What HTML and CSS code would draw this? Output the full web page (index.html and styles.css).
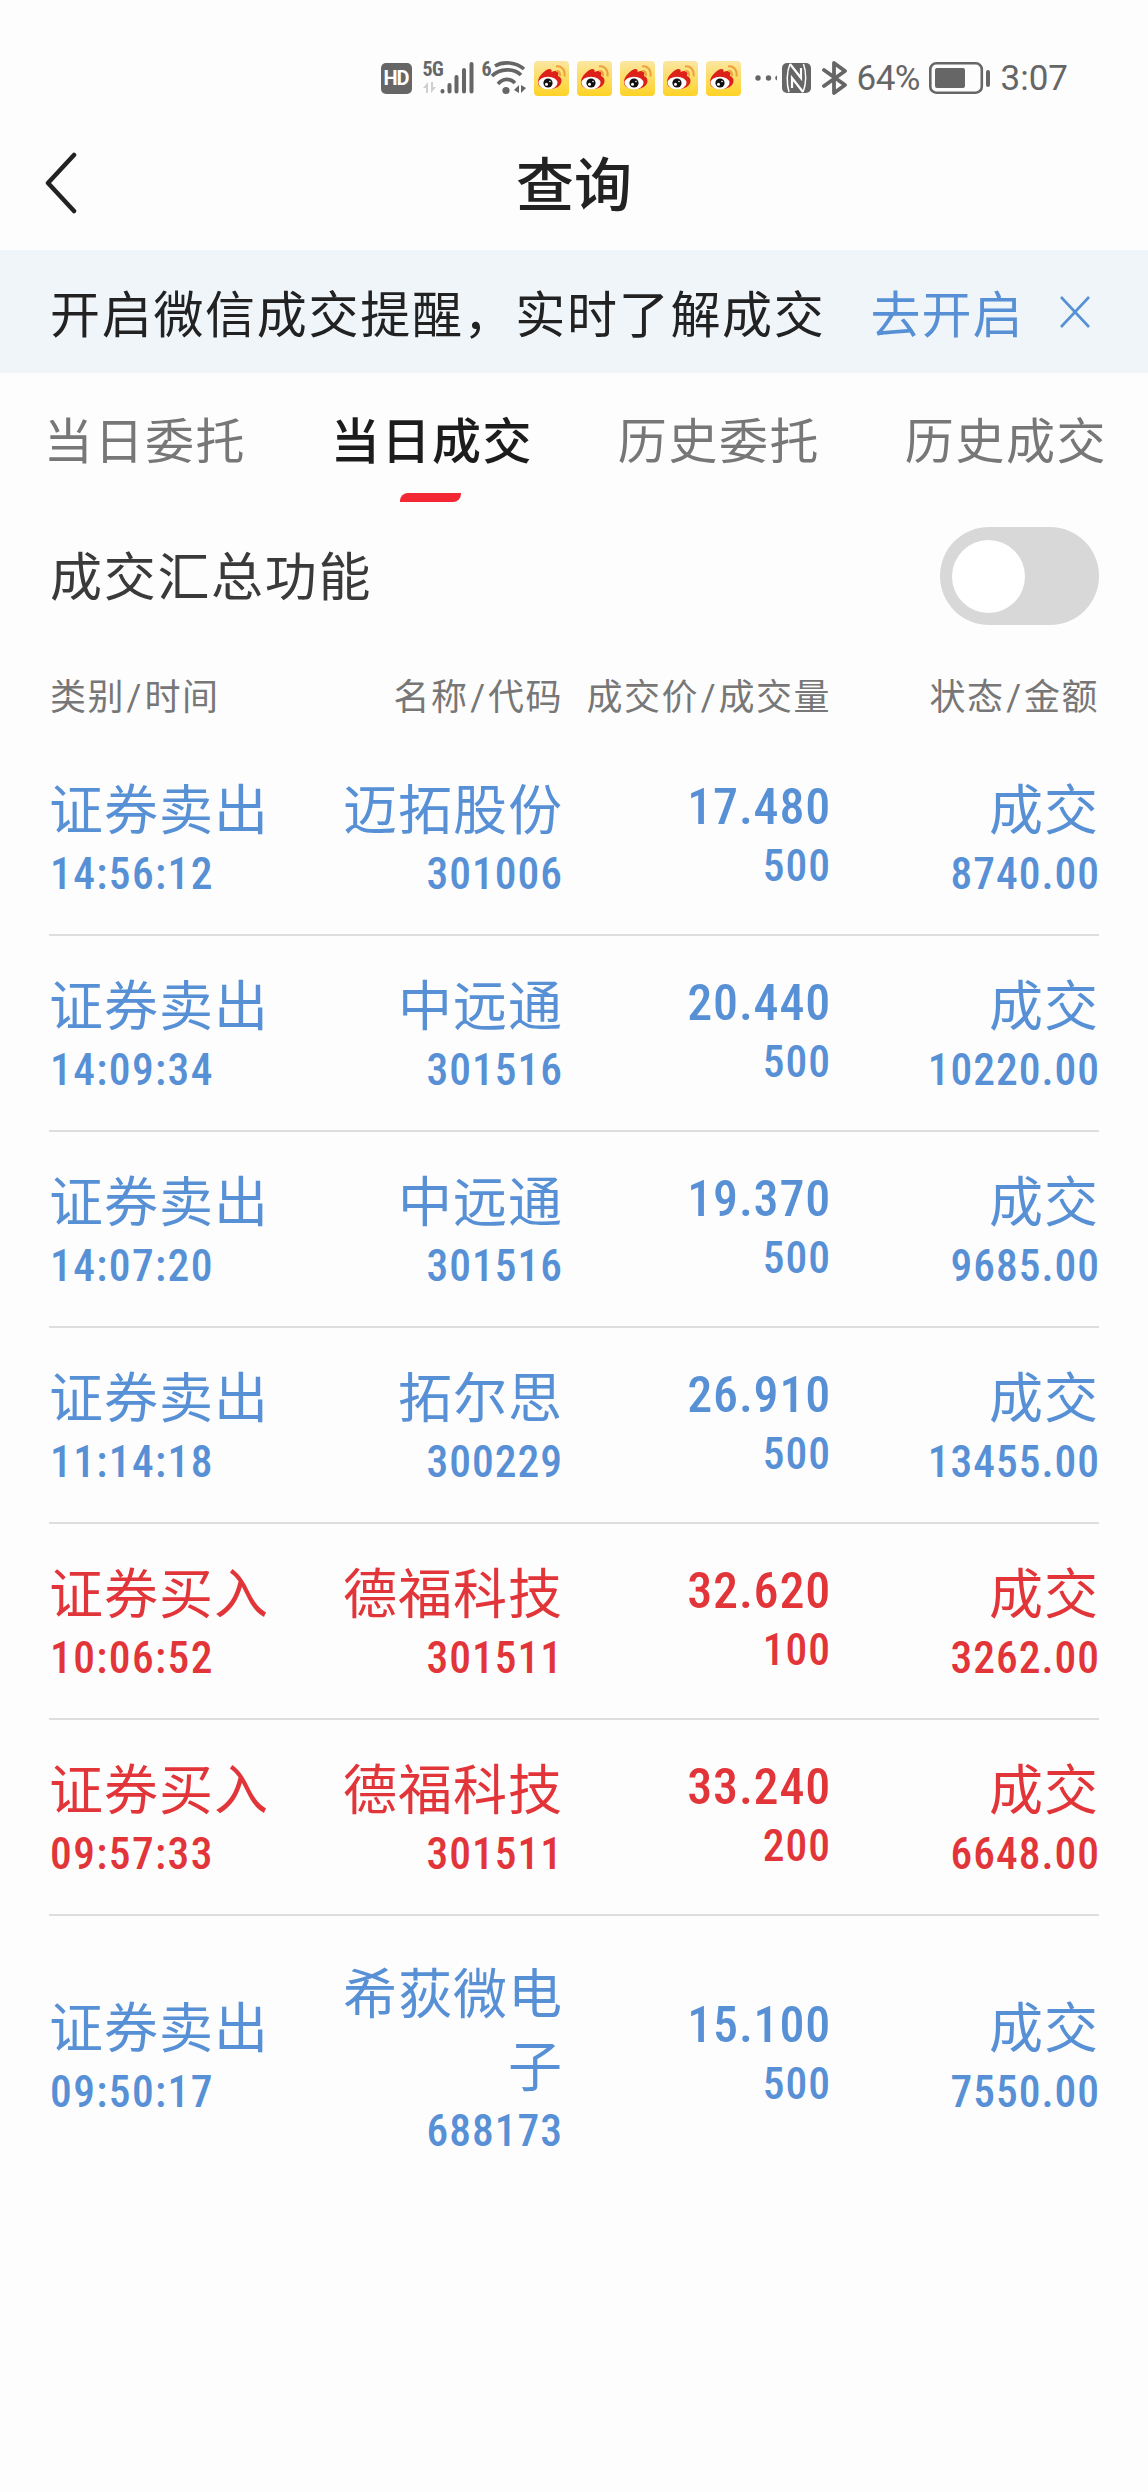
FILE: index.html
```html
<!DOCTYPE html>
<html lang="zh-CN">
<head>
  <meta charset="utf-8">
  <title>查询</title>
  <link rel="stylesheet" href="styles.css">
</head>
<body>
  <!-- shared status bar icon -->
  <svg width="0" height="0" class="defs">
    <defs>
      <linearGradient id="wb-bg" x1="0" y1="0" x2="0" y2="1">
        <stop offset="0" stop-color="#fbe6a2"/>
        <stop offset="1" stop-color="#fdd325"/>
      </linearGradient>
      <symbol id="weibo" viewBox="0 0 35 35">
        <rect width="35" height="35" rx="4" fill="url(#wb-bg)"/>
        <path d="M4 21C4 15 11 9 15 8c2.500 0 3 1 2.500 3 3-1.500 6.500-1.500 7 1 0 1-.5 2-.5 3 2.500 1 3.500 2.500 3.500 5 0 5-6 8-12 8S4 27 4 21z" fill="#dd211a"/>
        <ellipse cx="14" cy="22" rx="9.500" ry="6.300" fill="#fff"/>
        <circle cx="14" cy="22" r="4.600" fill="#111"/>
        <circle cx="12.500" cy="23.300" r="1.500" fill="#fff"/>
        <circle cx="16" cy="20.500" r=".8" fill="#fff"/>
        <path d="M22 5.500c5-1 9.500 3 8.500 10M22 10c2.800-.5 4.500 1.500 4 5" fill="none" stroke="#eda13a" stroke-width="2"/>
      </symbol>
    </defs>
  </svg>

  <div class="statusbar">
    <span class="hd">HD</span>
    <span class="signal">
      <span class="net">5G</span>
      <svg width="52" height="34" viewBox="0 0 52 34">
        <path d="M6 21v11H4v-5H1zM9 21v11l5-6h-3v-5z" fill="#cfcfcf"/>
        <path d="M20.500 30v.5M27.500 24v6.500M34.500 16v14.500M42 9v21.500M49.500 3v27.500" stroke="#666" stroke-width="4" stroke-linecap="round"/>
      </svg>
    </span>
    <span class="wifi">
      <span class="gen">6</span>
      <svg width="44" height="34" viewBox="0 0 44 34">
        <g fill="none" stroke="#666" stroke-width="3.600">
          <path d="M12 5C20 0 33 1 41 8"/>
          <path d="M9 15C17 7 31 7 38 14"/>
          <path d="M15 23C20 17 27 17 32 22"/>
        </g>
        <circle cx="23" cy="29.500" r="3.600" fill="#666"/>
        <path d="M31 29l5-5v8zM38 24v8l5-5z" fill="#666"/>
      </svg>
    </span>
    <svg class="wb" width="35" height="35"><use href="#weibo"/></svg>
    <svg class="wb" width="35" height="35"><use href="#weibo"/></svg>
    <svg class="wb" width="35" height="35"><use href="#weibo"/></svg>
    <svg class="wb" width="35" height="35"><use href="#weibo"/></svg>
    <svg class="wb" width="35" height="35"><use href="#weibo"/></svg>
    <svg class="dots" width="22" height="6" viewBox="0 0 22 6" fill="#666">
      <circle cx="3" cy="3" r="2.700"/><circle cx="13.500" cy="3" r="2.700"/><path d="M22 .5a2.600 2.600 0 0 0 0 5z"/>
    </svg>
    <svg class="nfc" width="29" height="30" viewBox="0 0 29 30">
      <rect width="29" height="30" rx="5" fill="#666"/>
      <path d="M8 1C4.500 9 4.500 21 7 29M21.500 1c3 8 3 20-.5 28" fill="none" stroke="#fdfdfd" stroke-width="1.500"/>
      <path d="M8 1l11 14V5M21 29L10 15v10" fill="none" stroke="#fdfdfd" stroke-width="2.200"/>
    </svg>
    <svg class="bt" width="26" height="34" viewBox="0 0 26 34">
      <path d="M2 9l21 15-11 8V2l11 8L2 25" fill="none" stroke="#666" stroke-width="3.800" stroke-linejoin="round" stroke-linecap="round"/>
    </svg>
    <span class="pct">64%</span>
    <svg class="battery" width="62" height="32" viewBox="0 0 62 32">
      <rect x="1.300" y="1.300" width="51.500" height="29.400" rx="6" fill="none" stroke="#666" stroke-width="2.600"/>
      <rect x="6" y="6" width="30" height="20" rx="2" fill="#666"/>
      <rect x="57" y="8" width="4" height="17" rx="2" fill="#666"/>
    </svg>
    <span class="clock">3:07</span>
  </div>

  <div class="titlebar">
    <svg class="back" width="34" height="62" viewBox="0 0 34 62">
      <path d="M30 3L4 31l26 28" fill="none" stroke="#222" stroke-width="4.500" stroke-linecap="round" stroke-linejoin="round"/>
    </svg>
    <h1>查询</h1>
  </div>

  <div class="notice">
    <span class="msg">开启微信成交提醒，实时了解成交</span>
    <a class="open">去开启</a>
    <svg class="close" width="32" height="32" viewBox="0 0 32 32">
      <path d="M2 1l28 30M30 1L2 31" stroke="#5890d6" stroke-width="2.600"/>
    </svg>
  </div>

  <div class="tabs">
    <div class="tab">当日委托</div>
    <div class="tab active">当日成交</div>
    <div class="tab">历史委托</div>
    <div class="tab">历史成交</div>
  </div>

  <div class="summary">
    <span>成交汇总功能</span>
    <div class="switch"><i></i></div>
  </div>

  <div class="list">
    <div class="head">
      <div>类别<s>/</s>时间</div>
      <div>名称<s>/</s>代码</div>
      <div>成交价<s>/</s>成交量</div>
      <div>状态<s>/</s>金额</div>
    </div>
    <div class="row sell">
      <div class="cell"><b>证券卖出</b><i>14:56:12</i></div>
      <div class="cell"><b>迈拓股份</b><i>301006</i></div>
      <div class="cell price"><em>17.480</em><i>500</i></div>
      <div class="cell"><b>成交</b><i>8740.00</i></div>
    </div>
    <div class="row sell">
      <div class="cell"><b>证券卖出</b><i>14:09:34</i></div>
      <div class="cell"><b>中远通</b><i>301516</i></div>
      <div class="cell price"><em>20.440</em><i>500</i></div>
      <div class="cell"><b>成交</b><i>10220.00</i></div>
    </div>
    <div class="row sell">
      <div class="cell"><b>证券卖出</b><i>14:07:20</i></div>
      <div class="cell"><b>中远通</b><i>301516</i></div>
      <div class="cell price"><em>19.370</em><i>500</i></div>
      <div class="cell"><b>成交</b><i>9685.00</i></div>
    </div>
    <div class="row sell">
      <div class="cell"><b>证券卖出</b><i>11:14:18</i></div>
      <div class="cell"><b>拓尔思</b><i>300229</i></div>
      <div class="cell price"><em>26.910</em><i>500</i></div>
      <div class="cell"><b>成交</b><i>13455.00</i></div>
    </div>
    <div class="row buy">
      <div class="cell"><b>证券买入</b><i>10:06:52</i></div>
      <div class="cell"><b>德福科技</b><i>301511</i></div>
      <div class="cell price"><em>32.620</em><i>100</i></div>
      <div class="cell"><b>成交</b><i>3262.00</i></div>
    </div>
    <div class="row buy">
      <div class="cell"><b>证券买入</b><i>09:57:33</i></div>
      <div class="cell"><b>德福科技</b><i>301511</i></div>
      <div class="cell price"><em>33.240</em><i>200</i></div>
      <div class="cell"><b>成交</b><i>6648.00</i></div>
    </div>
    <div class="row sell last">
      <div class="cell"><b>证券卖出</b><i>09:50:17</i></div>
      <div class="cell"><b>希荻微电子</b><i>688173</i></div>
      <div class="cell price"><em>15.100</em><i>500</i></div>
      <div class="cell"><b>成交</b><i>7550.00</i></div>
    </div>
  </div>
</body>
</html>
```
FILE: styles.css
```css
body {
  margin: 0;
  min-height: 2492px;
  background: #fdfdfd;
  font-family: Roboto, "Noto Sans CJK SC", sans-serif;
  color: #222;
}

.defs {
  position: absolute;
}

/* status bar */
.statusbar {
  display: flex;
  align-items: center;
  justify-content: flex-end;
  height: 156px;
  padding-right: 80px;
  box-sizing: border-box;
  color: #666;
  font-size: 35px;
  line-height: 40px;
}
.hd {
  width: 31px;
  height: 31px;
  border-radius: 5px;
  background: #666;
  color: #fff;
  font-size: 20px;
  line-height: 31px;
  font-weight: bold;
  text-align: center;
  letter-spacing: -1px;
}
.signal, .wifi {
  position: relative;
  height: 34px;
}
.signal {
  margin-left: 10px;
  width: 52px;
}
.wifi {
  margin-left: 9px;
  width: 44px;
}
.net, .gen {
  position: absolute;
  top: -1px;
  left: 0;
  font-size: 20px;
  line-height: 18px;
  font-weight: bold;
  font-stretch: 75%;
  letter-spacing: -.5px;
}
.net {
  left: 1px;
}
.gen {
  left: -1px;
}
.wb {
  margin-left: 8px;
}
.wifi + .wb {
  margin-left: 7px;
}
.dots {
  margin-left: 14px;
}
.nfc {
  margin-left: 5px;
}
.bt {
  margin-left: 11px;
}
.pct {
  margin-left: 9px;
  width: 65px;
  letter-spacing: -.5px;
  padding-top: 1px;
}
.battery {
  margin-left: 7px;
}
.clock {
  margin-left: 10px;
  padding-top: 1px;
}

.titlebar {
  position: relative;
  height: 94px;
  text-align: center;
}
.back {
  position: absolute;
  left: 44px;
  top: -4px;
}
h1 {
  margin: 0;
  font-size: 58px;
  line-height: 61px;
  font-weight: 500;
}

/* wechat notice */
.notice {
  display: flex;
  align-items: center;
  height: 123px;
  padding: 0 50px;
  background: #f0f5fa;
  font-size: 50px;
  letter-spacing: 1.7px;
}
.msg, .open {
  padding-bottom: 2px;
}
.open {
  margin-left: 45px;
  color: #5890d6;
  letter-spacing: 1px;
}
.close {
  margin-left: 35px;
}

.tabs {
  display: flex;
  height: 136px;
}
.tab {
  position: relative;
  flex: 1;
  padding-left: 3px;
  text-align: center;
  font-size: 49px;
  line-height: 139px;
  letter-spacing: 1.6px;
  color: #777;
}
.tab.active {
  color: #1c1c1c;
  font-weight: 500;
}
.tab.active::after {
  content: "";
  position: absolute;
  left: 113px;
  bottom: 7px;
  width: 61px;
  height: 9px;
  border-radius: 8px 0;
  background: #f42735;
}

.summary {
  display: flex;
  align-items: center;
  justify-content: space-between;
  height: 134px;
  padding: 0 49px 0 50px;
  font-size: 52px;
  letter-spacing: 1.7px;
  color: #3a3a3a;
}
.summary span {
  padding-bottom: 5px;
}
.switch {
  width: 159px;
  height: 98px;
  border-radius: 49px;
  background: #d8d8d8;
}
.switch i {
  display: block;
  width: 73px;
  height: 73px;
  margin: 13px 0 0 12px;
  border-radius: 50%;
  background: #fff;
}

/* deals */
.list {
  padding: 0 49px;
}
.head, .row {
  display: grid;
  grid-template-columns: 252px 261px 268px 269px;
  align-items: center;
  text-align: right;
}
.head {
  height: 97px;
  font-size: 36px;
  line-height: 110px;
  letter-spacing: 1.5px;
  color: #777;
}
.head div:first-child {
  padding-left: 1px;
}
.head div:nth-child(2), .head div:nth-child(3) {
  margin-right: -1px;
}
.head div:nth-child(3) {
  margin-left: -10px;
}
.head s {
  margin: 0 1.5px;
  text-decoration: none;
}
.head div:first-child, .cell:first-child {
  text-align: left;
}
.row {
  padding: 35px 0 33px;
  border-bottom: 2px solid #dedede;
}
.cell b, .cell i, .cell em {
  display: block;
  font-style: normal;
}
.cell b {
  font-size: 54px;
  line-height: 73px;
  letter-spacing: 1px;
  font-weight: normal;
}
.cell:nth-child(2) b {
  padding-left: 30px;
  margin-right: -1px;
}
.cell i {
  margin-right: -1px;
  font-size: 43.5px;
  line-height: 53px;
  font-weight: 500;
  font-stretch: 80%;
  letter-spacing: 1px;
}
.cell:first-child i {
  padding-left: 1px;
  letter-spacing: 1.4px;
}
.cell em {
  margin-right: -1px;
  font-size: 50px;
  line-height: 57px;
  font-weight: 500;
  font-stretch: 80%;
  letter-spacing: .8px;
}
.price i {
  line-height: 61px;
}
.sell {
  color: #5890d6;
}
.buy {
  color: #e23539;
}
.last {
  border-bottom: 0;
  padding-top: 38px;
}
.last .cell:nth-child(2) {
  padding-top: 5px;
}
```
